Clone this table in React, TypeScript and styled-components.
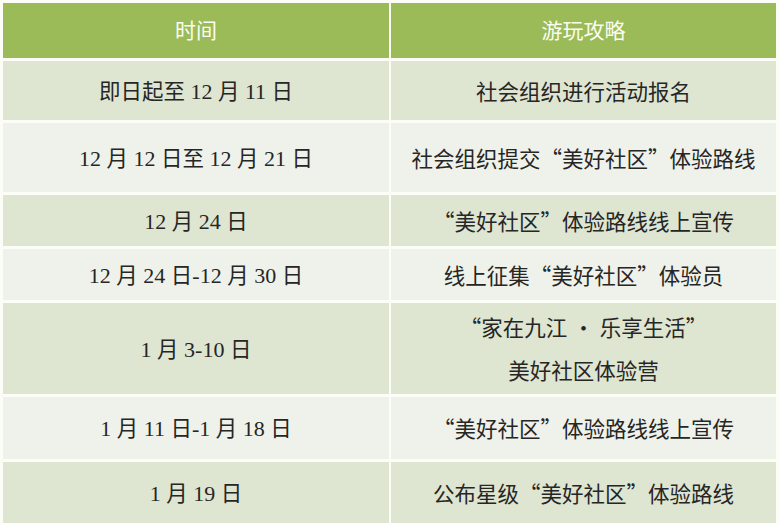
import * as React from 'react'
import styled, { createGlobalStyle } from 'styled-components'

const GlobalStyle = createGlobalStyle`
  html, body {
    margin: 0;
    padding: 0;
    background: #fdfdf7;
  }
`

const cjk = '"Noto Sans CJK SC", "Liberation Serif", sans-serif'

const Table = styled.div`
  width: 780px;
  height: 523px;
  box-sizing: border-box;
  padding: 3px 4px 0 3px;
  display: grid;
  grid-template-columns: 386px 385px;
  grid-template-rows: 55px 59px 69px 51px 51px 91px 62px 61px;
  column-gap: 2px;
  row-gap: 3px;
  font-family: ${cjk};
`

const HeadCell = styled.div`
  background: #9bbb59;
  color: #fbfdf2;
  font-size: 21px;
  padding-bottom: 3px;
  display: flex;
  align-items: center;
  justify-content: center;
`

const Cell = styled.div<{ odd: boolean }>`
  background: ${({ odd }) => (odd ? '#dee5d1' : '#eff2ea')};
  color: #262626;
  font-size: 21.5px;
  line-height: 30px;
  display: flex;
  flex-direction: column;
  align-items: center;
  justify-content: center;
  text-align: center;
  white-space: nowrap;
`

const Line = styled.div`
  & + & {
    margin-top: 11px;
  }
`

const Num = styled.span`
  font-family: "Liberation Serif", serif;
  font-size: 22px;
`

const renderText = (text: string) =>
  text.split(/([0-9\- ]+)/).map((part, i) =>
    /^[0-9\- ]+$/.test(part) ? <Num key={i}>{part}</Num> : <React.Fragment key={i}>{part}</React.Fragment>
  )

const rows: { time: string; plan: string[] }[] = [
  { time: '即日起至 12 月 11 日', plan: ['社会组织进行活动报名'] },
  { time: '12 月 12 日至 12 月 21 日', plan: ['社会组织提交“美好社区”体验路线'] },
  { time: '12 月 24 日', plan: ['“美好社区”体验路线线上宣传'] },
  { time: '12 月 24 日-12 月 30 日', plan: ['线上征集“美好社区”体验员'] },
  { time: '1 月 3-10 日', plan: ['“家在九江 · 乐享生活”', '美好社区体验营'] },
  { time: '1 月 11 日-1 月 18 日', plan: ['“美好社区”体验路线线上宣传'] },
  { time: '1 月 19 日', plan: ['公布星级“美好社区”体验路线'] },
]

export default function App() {
  return (
    <>
      <GlobalStyle />
      <Table>
        <HeadCell>时间</HeadCell>
        <HeadCell>游玩攻略</HeadCell>
        {rows.map((row, i) => (
          <React.Fragment key={i}>
            <Cell odd={i % 2 === 0}>
              <Line>{renderText(row.time)}</Line>
            </Cell>
            <Cell odd={i % 2 === 0}>
              {row.plan.map((line, j) => (
                <Line key={j}>{renderText(line)}</Line>
              ))}
            </Cell>
          </React.Fragment>
        ))}
      </Table>
    </>
  )
}
